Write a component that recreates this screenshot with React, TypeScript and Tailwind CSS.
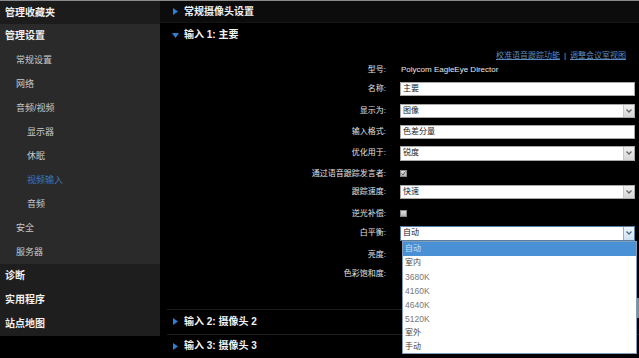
import React from "react";

const FONT = { fontFamily: '"Liberation Sans","Noto Sans CJK SC",sans-serif' };

function RightArrow() {
  return (
    <svg width="5" height="7" viewBox="0 0 5 7" className="shrink-0">
      <path d="M0 0 L5 3.5 L0 7 Z" fill="#2f7fd2" />
    </svg>
  );
}
function DownArrow() {
  return (
    <svg width="7" height="5" viewBox="0 0 7 5" className="shrink-0">
      <path d="M0 0 L7 0 L3.5 5 Z" fill="#2f7fd2" />
    </svg>
  );
}
function Chevron({ color = "#666" }: { color?: string }) {
  return (
    <svg width="6" height="4" viewBox="0 0 6 4">
      <path d="M0.5 0.5 L3 3 L5.5 0.5" stroke={color} strokeWidth="1.3" fill="none" />
    </svg>
  );
}

function TextBox({ value }: { value: string }) {
  return (
    <div className="h-full w-full bg-white border border-[#a8a8a8] flex items-center pl-[2px] text-[8px] leading-none text-[#222]">
      {value}
    </div>
  );
}
function SelectBox({ value, focused = false }: { value: string; focused?: boolean }) {
  return (
    <div
      className={
        focused
          ? "h-full w-full bg-white border border-[#5a7fa5] flex items-stretch"
          : "h-full w-full bg-white border border-[#a8a8a8] flex items-stretch"
      }
    >
      <div className="flex-1 flex items-center pl-[2px] text-[8px] leading-none text-[#222]">{value}</div>
      <div
        className={
          focused
            ? "w-[11px] border-l border-[#8fb0d0] bg-gradient-to-b from-[#eef5fc] to-[#cfe0f0] flex items-center justify-center"
            : "w-[11px] border-l border-[#c8c8c8] bg-gradient-to-b from-[#f0f0f0] to-[#d6d6d6] flex items-center justify-center"
        }
      >
        <Chevron color={focused ? "#4a6a8a" : "#666"} />
      </div>
    </div>
  );
}
function CheckBox({ checked }: { checked: boolean }) {
  return (
    <div className="w-[7px] h-[7px] bg-gradient-to-b from-[#e0e0e0] to-[#b4b4b4] border border-[#888] flex items-center justify-center">
      {checked && (
        <svg width="5" height="5" viewBox="0 0 5 5">
          <path d="M0.5 2.5 L2 4 L4.5 0.5" stroke="#555" strokeWidth="1" fill="none" />
        </svg>
      )}
    </div>
  );
}

function Row({
  label,
  mt,
  h,
  children,
}: {
  label: string;
  mt: string;
  h: string;
  children: React.ReactNode;
}) {
  return (
    <div className={`flex items-center ${mt} ${h}`}>
      <div className="w-[228px] text-right text-[8px] leading-none text-[#e2e2e2] pr-[2px] whitespace-nowrap">
        {label}
      </div>
      <div className="ml-[12px] w-[235px] h-full flex items-center">{children}</div>
    </div>
  );
}

const sideTop = "h-[24px] flex items-center pl-[5px] text-[10px] font-bold text-[#f0f0f0] leading-none";
const sideSub = "h-[24px] flex items-center pl-[16px] text-[9px] text-[#c8c8c8] leading-none";
const sideSub2 = "h-[24px] flex items-center pl-[27px] text-[9px] text-[#c8c8c8] leading-none";
const sideSub2Active = "h-[24px] flex items-center pl-[27px] text-[9px] text-[#3b78b4] leading-none";

export default function App() {
  const options = ["自动", "室内", "3680K", "4160K", "4640K", "5120K", "室外", "手动"];
  return (
    <div
      className="relative w-[639px] h-[358px] overflow-hidden bg-black border-t border-[#8a8a8a] flex"
      style={FONT}
    >
      {/* Sidebar */}
      <div className="w-[160px] shrink-0 flex flex-col">
        <div className="h-[23px] flex items-center pl-[5px] text-[10px] font-bold text-[#f0f0f0] leading-none bg-[#1c1c1c]">
          管理收藏夹
        </div>
        <div className="bg-[#2a2a2a] flex flex-col">
          <div className={sideTop}>管理设置</div>
          <div className={sideSub}>常规设置</div>
          <div className={sideSub}>网络</div>
          <div className={sideSub}>音频/视频</div>
          <div className={sideSub2}>显示器</div>
          <div className={sideSub2}>休眠</div>
          <div className={sideSub2Active}>视频输入</div>
          <div className={sideSub2}>音频</div>
          <div className={sideSub}>安全</div>
          <div className={sideSub}>服务器</div>
        </div>
        <div className="bg-[#1e1e1e] flex flex-col">
          <div className={sideTop}>诊断</div>
          <div className={sideTop}>实用程序</div>
          <div className={sideTop}>站点地图</div>
        </div>
      </div>

      {/* Main */}
      <div className="flex-1 flex flex-col">
        <div className="h-[23px] bg-[#0c0c0c] border-b border-[#141414] flex items-center gap-[6px] pl-[13px]">
          <RightArrow />
          <span className="text-[10px] font-bold text-[#f2f2f2] leading-none">常规摄像头设置</span>
        </div>
        <div className="h-[24px] flex items-center gap-[5px] pl-[12px]">
          <DownArrow />
          <span className="text-[10px] font-bold text-[#f2f2f2] leading-none">输入 1: 主要</span>
        </div>

        <div className="relative h-[269px] flex flex-col">
          <div className="mt-[2px] h-[14px] flex items-center justify-end pr-[13px] text-[8px] leading-none">
            <span className="text-[#5d8cbb] underline">校准语音跟踪功能</span>
            <span className="text-[#aaa] mx-[4px]">|</span>
            <span className="text-[#5d8cbb] underline">调整会议室视图</span>
          </div>
          <Row label="型号:" mt="mt-0" h="h-[14px]">
            <span className="text-[8px] leading-none text-[#e8e8e8] pl-[1px]">Polycom EagleEye Director</span>
          </Row>
          <Row label="名称:" mt="mt-[5px]" h="h-[14px]">
            <TextBox value="主要" />
          </Row>
          <Row label="显示为:" mt="mt-[8px]" h="h-[14px]">
            <SelectBox value="图像" />
          </Row>
          <Row label="输入格式:" mt="mt-[7px]" h="h-[14px]">
            <TextBox value="色差分量" />
          </Row>
          <Row label="优化用于:" mt="mt-[7px]" h="h-[15px]">
            <SelectBox value="锐度" />
          </Row>
          <Row label="通过语音跟踪发言者:" mt="mt-[6px]" h="h-[14px]">
            <CheckBox checked />
          </Row>
          <Row label="跟踪速度:" mt="mt-[4px]" h="h-[14px]">
            <SelectBox value="快速" />
          </Row>
          <Row label="逆光补偿:" mt="mt-[8px]" h="h-[14px]">
            <CheckBox checked={false} />
          </Row>
          <Row label="白平衡:" mt="mt-[5px]" h="h-[15px]">
            <SelectBox value="自动" focused />
          </Row>
          <Row label="亮度:" mt="mt-[7px]" h="h-[14px]">
            <span />
          </Row>
          <Row label="色彩饱和度:" mt="mt-[5px]" h="h-[14px]">
            <span />
          </Row>

          {/* Dropdown list */}
          <div className="absolute left-[242px] top-[194px] w-[235px] h-[113px] bg-white border border-[#7f9db9] flex flex-col z-10">
            {options.map((o, i) => (
              <div
                key={o}
                className={
                  i === 0
                    ? "h-[14px] shrink-0 flex items-center pl-[2px] text-[8px] leading-none bg-[#4a90d4] text-[#c9e0f5]"
                    : /\d/.test(o)
                    ? "h-[14px] shrink-0 flex items-center pl-[2px] text-[8.5px] leading-none text-[#777]"
                    : "h-[14px] shrink-0 flex items-center pl-[2px] text-[8px] leading-none text-[#444]"
                }
              >
                {o}
              </div>
            ))}
          </div>
        </div>

        <div className="ml-[7px] border-t border-[#1c1c1c] h-[25px] flex items-center gap-[6px] pl-[6px]">
          <RightArrow />
          <span className="text-[10px] font-bold text-[#f2f2f2] leading-none">输入 2: 摄像头 2</span>
        </div>
        <div className="ml-[7px] border-t border-[#1c1c1c] h-[25px] flex items-center gap-[6px] pl-[6px]">
          <RightArrow />
          <span className="text-[10px] font-bold text-[#f2f2f2] leading-none">输入 3: 摄像头 3</span>
        </div>
      </div>

      {/* scrollbar thumb */}
      <div className="absolute right-0 top-[297px] w-[3px] h-[20px] bg-[#8a8a8a]" />
    </div>
  );
}
